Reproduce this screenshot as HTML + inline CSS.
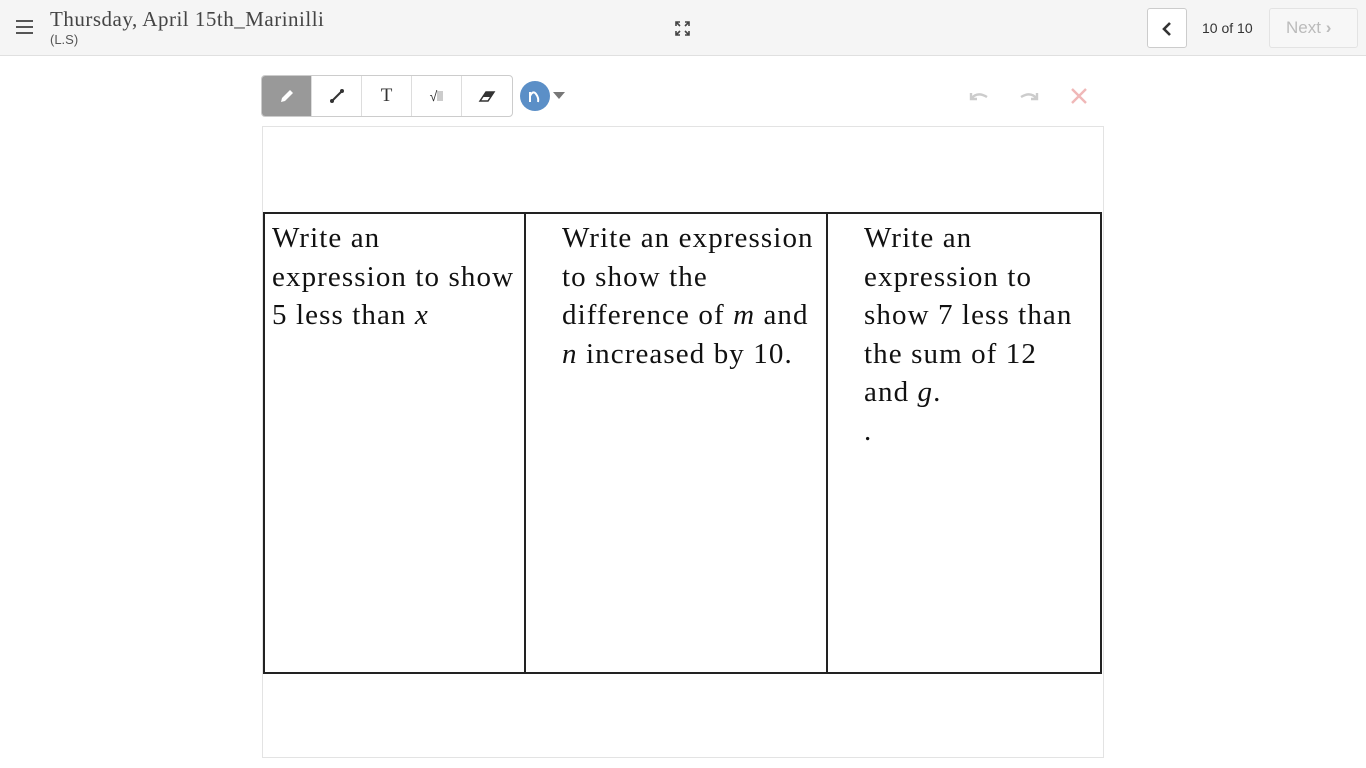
<!DOCTYPE html>
<html><head><meta charset="utf-8"><style>
*{box-sizing:border-box;margin:0;padding:0}
body{width:1366px;height:768px;background:#fff;font-family:"Liberation Sans",sans-serif;position:relative;overflow:hidden}
.hdr{position:absolute;left:0;top:0;width:1366px;height:56px;background:#f5f5f5;border-bottom:1px solid #e0e0e0}
.abs{position:absolute}
.title{left:50px;top:7px;font-family:"Liberation Serif",serif;font-size:21px;letter-spacing:0.5px;color:#444}
.sub{left:50px;top:32px;font-size:13px;color:#555}
.btn{border:1px solid #ccc;border-radius:3px;background:#fff}
.tb{left:261px;top:75px;width:252px;height:42px;border:1px solid #ccc;border-radius:4px;display:flex;overflow:hidden}
.tb div{width:50px;height:40px;border-right:1px solid #ddd;display:flex;align-items:center;justify-content:center;color:#333}
.tb div:last-child{border-right:none}
.canvas{left:262px;top:126px;width:842px;height:632px;border:1px solid #e3e3e3}
.t{position:absolute;font-family:"Liberation Serif",serif;font-size:29px;letter-spacing:1.1px;line-height:38.5px;color:#111}
.v{position:absolute;background:#222;width:1.5px}
.h{position:absolute;background:#222;height:1.5px}
</style></head><body>
<div class="hdr">
<div class="abs" style="left:16px;top:20px;width:17px;height:2px;background:#555;box-shadow:0 6px 0 #555,0 12px 0 #555"></div>
<div class="abs title">Thursday, April 15th_Marinilli</div>
<div class="abs sub">(L.S)</div>
<svg class="abs" style="left:674px;top:20px" width="17" height="17" viewBox="0 0 17 17" fill="none" stroke="#444" stroke-width="1.6"><path d="M2 6V2h4M2 2l4 4M15 6V2h-4M15 2l-4 4M2 11v4h4M2 15l4-4M15 11v4h-4M15 15l-4-4"/></svg>
<div class="abs btn" style="left:1147px;top:8px;width:40px;height:40px"><svg style="position:absolute;left:13px;top:12px" width="12" height="16" viewBox="0 0 12 16"><path d="M9 2L3 8l6 6" stroke="#333" stroke-width="2.6" fill="none"/></svg></div>
<div class="abs" style="left:1202px;top:20px;font-size:14px;color:#333">10 of 10</div>
<div class="abs btn" style="left:1269px;top:8px;width:89px;height:40px;border-color:#e3e3e3;background:#f7f7f7;color:#bbb;font-size:17px;padding:9px 0 0 16px">Next <span style="font-weight:bold">&#x203A;</span></div>
</div>
<div class="abs tb">
<div style="background:#999"><svg width="18" height="18" viewBox="0 0 18 18"><path d="M3 15l1-4 8-8 3 3-8 8z" fill="#fff"/></svg></div>
<div><svg width="18" height="18" viewBox="0 0 18 18"><path d="M4 14L14 4" stroke="#333" stroke-width="2"/><circle cx="4" cy="14" r="2" fill="#333"/><circle cx="14" cy="4" r="2" fill="#333"/></svg></div>
<div style="font-family:'Liberation Serif',serif;font-size:19px">T</div>
<div style="font-size:14px">√<span style="display:inline-block;width:6px;height:10px;background:#ccc"></span></div>
<div><svg width="18" height="18" viewBox="0 0 18 18"><path d="M2 14L8 5h8l-6 9z" fill="none" stroke="#333" stroke-width="1.5"/><path d="M5 10l3-5h8l-3 5z" fill="#333"/></svg></div>
</div>
<div class="abs" style="left:520px;top:81px;width:30px;height:30px;border-radius:50%;background:#5b8fc7"><svg width="30" height="30" viewBox="0 0 30 30"><path d="M10 21V11M10 15q3-6 6-2t2 8" stroke="#fff" stroke-width="2" fill="none"/></svg></div>
<div class="abs" style="left:553px;top:92px;border-left:6px solid transparent;border-right:6px solid transparent;border-top:7px solid #777"></div>
<svg class="abs" style="left:968px;top:88px" width="22" height="16" viewBox="0 0 22 16"><path d="M3 5v6h6M3 11q6-8 16-2" stroke="#ccc" stroke-width="2.4" fill="none"/></svg>
<svg class="abs" style="left:1018px;top:88px" width="22" height="16" viewBox="0 0 22 16"><path d="M19 5v6h-6M19 11q-6-8-16-2" stroke="#ccc" stroke-width="2.4" fill="none"/></svg>
<svg class="abs" style="left:1070px;top:87px" width="18" height="18" viewBox="0 0 18 18"><path d="M2 2l14 14M16 2L2 16" stroke="#f0b8b8" stroke-width="2.4"/></svg>
<div class="abs canvas"></div>
<div class="h" style="left:263px;top:212px;width:839px"></div>
<div class="h" style="left:263px;top:672px;width:839px"></div>
<div class="v" style="left:263px;top:212px;height:462px"></div>
<div class="v" style="left:524px;top:212px;height:462px"></div>
<div class="v" style="left:826px;top:212px;height:462px"></div>
<div class="v" style="left:1100px;top:212px;height:462px"></div>
<div class="t" style="left:272px;top:219px">Write an<br>expression to show<br>5 less than <i>x</i></div>
<div class="t" style="left:562px;top:219px">Write an expression<br>to show the<br>difference of <i>m</i> and<br><i>n</i> increased by 10.</div>
<div class="t" style="left:864px;top:219px">Write an<br>expression to<br>show 7 less than<br>the sum of 12<br>and <i>g</i>.<br>.</div>
</body></html>
